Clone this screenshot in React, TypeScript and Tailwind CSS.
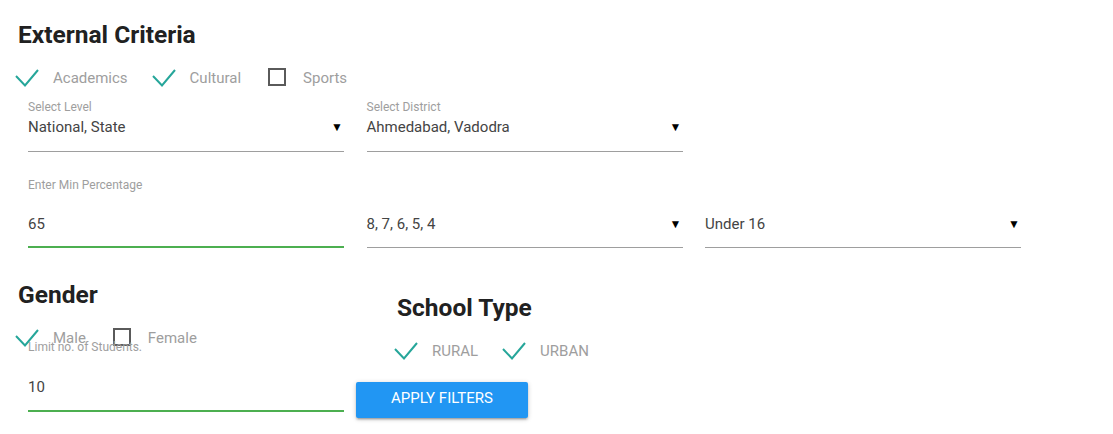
import React from "react";

type CheckItem = { label: string; checked: boolean };

function CheckRow({ items }: { items: CheckItem[] }) {
  return (
    <div className="flex h-6 items-center gap-[27px]">
      {items.map((it) => (
        <div key={it.label} className="flex h-6 items-center">
          <svg width="35" height="24" viewBox="0 0 35 24" className="shrink-0 overflow-visible">
            {it.checked ? (
              <polyline
                points="-2,10 7,19.5 20,4"
                fill="none"
                stroke="#26a69a"
                strokeWidth="2"
              />
            ) : (
              <rect x="1" y="3" width="16" height="16" fill="none" stroke="#5a5a5a" strokeWidth="2" />
            )}
          </svg>
          <span className="text-[15px] leading-6 text-[#9e9e9e]">{it.label}</span>
        </div>
      ))}
    </div>
  );
}

function Field({
  label,
  value,
  select,
  active,
  spaced,
}: {
  label?: string;
  value: string;
  select?: boolean;
  active?: boolean;
  spaced?: boolean;
}) {
  return (
    <div className="w-[316px]">
      <div className="h-4 text-[12px] leading-4 text-[#9e9e9e]">{label}</div>
      <div
        className={
          (spaced ? "mt-[19px] " : "") +
          (active
            ? "border-b-2 border-[#4caf50] pb-[10px]"
            : "border-b border-[#9e9e9e] " + (spaced ? "pb-[11px]" : "pb-[12px]"))
        }
      >
        <div className="flex h-6 items-center justify-between">
          <span className="text-[15px] text-[#444]">{value}</span>
          {select && <span className="pr-[1px] text-[12px] text-black">▼</span>}
        </div>
      </div>
    </div>
  );
}

export default function App() {
  return (
    <div className="h-[434px] w-full bg-white pt-[19px] font-['Roboto',sans-serif]">
      {/* External criteria */}
      <div className="pl-[18px]">
        <h4 className="text-[24.5px] font-bold leading-8 text-[#212121]">External Criteria</h4>
        <div className="mt-[15px]">
          <CheckRow
            items={[
              { label: "Academics", checked: true },
              { label: "Cultural", checked: true },
              { label: "Sports", checked: false },
            ]}
          />
        </div>
      </div>

      <div className="mt-[9px] flex gap-[22.5px] pl-[28px]">
        <Field label="Select Level" value="National, State" select />
        <Field label="Select District" value="Ahmedabad, Vadodra" select />
      </div>

      <div className="mt-[25px] flex gap-[22.5px] pl-[28px]">
        <Field label="Enter Min Percentage" value="65" active spaced />
        <Field value="8, 7, 6, 5, 4" select spaced />
        <Field value="Under 16" select spaced />
      </div>

      {/* Gender + school type */}
      <div className="mt-[31px] flex pl-[18px]">
        <div className="w-[338px]">
          <h4 className="text-[24.5px] font-bold leading-8 text-[#212121]">Gender</h4>
          <div className="mt-[15px]">
            <CheckRow
              items={[
                { label: "Male", checked: true },
                { label: "Female", checked: false },
              ]}
            />
          </div>
          <div className="relative -mt-[11px] pl-[10px]">
            <div className="w-[316px]">
              <div className="h-4 text-[12px] leading-4 text-[#9e9e9e]">Limit no. of Students.</div>
              <div className="mt-[20px] border-b-2 border-[#4caf50] pb-[11px]">
                <div className="flex h-6 items-center">
                  <span className="text-[15px] text-[#444]">10</span>
                </div>
              </div>
            </div>
          </div>
        </div>

        <div>
          <div className="pl-[41px] pt-[13px]">
            <h4 className="text-[24.5px] font-bold leading-8 text-[#212121]">School Type</h4>
            <div className="mt-[15px]">
              <CheckRow
                items={[
                  { label: "RURAL", checked: true },
                  { label: "URBAN", checked: true },
                ]}
              />
            </div>
          </div>
          <button className="mt-[19px] h-9 w-[172px] rounded-[2px] bg-[#2196f3] pb-[3px] text-[15px] text-white shadow-[0_2px_2px_0_rgba(0,0,0,0.14),0_3px_1px_-2px_rgba(0,0,0,0.12),0_1px_5px_0_rgba(0,0,0,0.2)]">
            APPLY FILTERS
          </button>
        </div>
      </div>
    </div>
  );
}
